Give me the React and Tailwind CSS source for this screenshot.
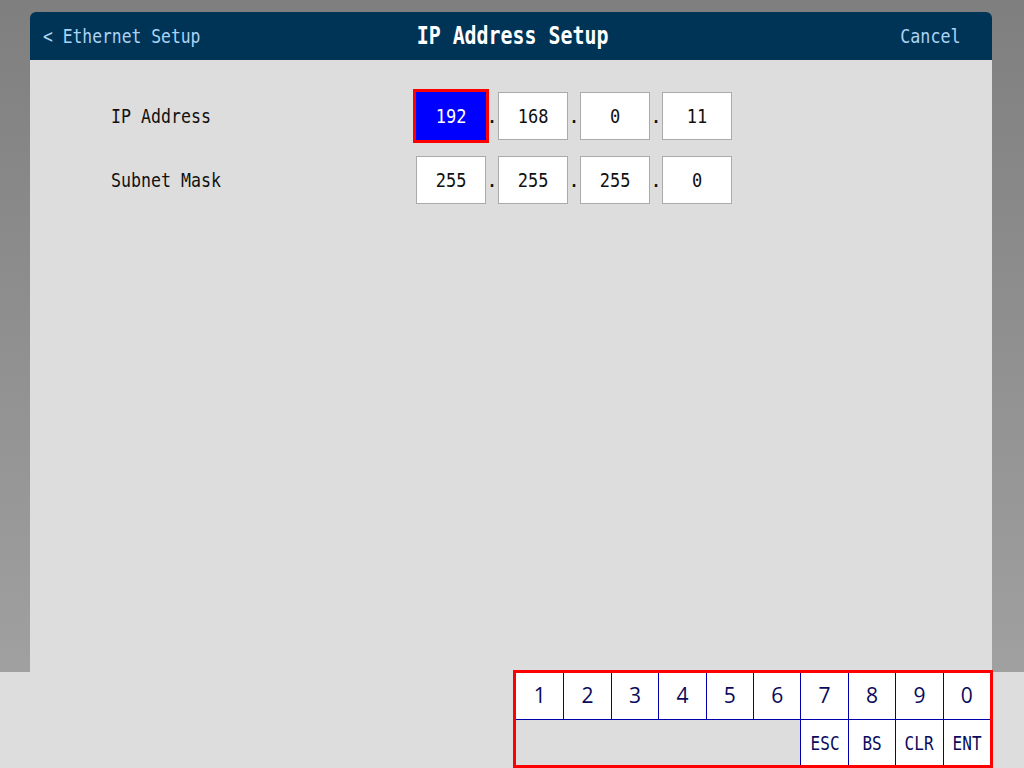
import React from 'react';

const mono = { fontFamily: '"DejaVu Sans Mono", monospace' };

const rows = [
  { label: 'IP Address', values: ['192', '168', '0', '11'], active: 0 },
  { label: 'Subnet Mask', values: ['255', '255', '255', '0'], active: -1 },
];

const digits = ['1', '2', '3', '4', '5', '6', '7', '8', '9', '0'];
const actions = ['ESC', 'BS', 'CLR', 'ENT'];

const Field = ({ value, active }) => (
  <div
    className={
      active
        ? 'w-[70px] h-12 flex items-center justify-center bg-[#0000ff] text-white outline-[3px] outline-solid outline-[#ff0000]'
        : 'w-[70px] h-12 flex items-center justify-center bg-white text-[#111] border border-[#aaaaaa]'
    }
  >
    <span className="inline-block text-[20px] scale-x-[0.85] origin-center" style={mono}>
      {value}
    </span>
  </div>
);

const Keypad = () => (
  <div className="w-[480px] h-[98px] -mt-[2px] border-[3px] border-[#ff0000] grid grid-cols-10 grid-rows-[47px_1fr] bg-[#dddddd]">
    {digits.map((d, i) => (
      <div
        key={d}
        className={
          'bg-white border-b border-[#0000aa] flex items-center justify-center text-[21px] text-[#0a0a5c] ' +
          (i > 0 ? 'border-l' : '')
        }
        style={{ fontFamily: '"Open Sans", sans-serif' }}
      >
        {d}
      </div>
    ))}
    <div className="col-span-6 bg-[#dddddd]" />
    {actions.map((a) => (
      <div key={a} className="bg-white border-l border-[#0000aa] flex items-center justify-center text-[#0a0a5c]">
        <span className="inline-block text-[20px] scale-x-[0.8] origin-center" style={mono}>
          {a}
        </span>
      </div>
    ))}
  </div>
);

const App = () => {
  return (
    <div className="w-[1024px] h-[768px] overflow-hidden flex flex-col bg-linear-to-b from-[#7f7f7f] to-[#a5a5a5]">
      <div className="flex-1 pt-3 pl-[30px] pr-[32px] flex flex-col">
        <div className="h-12 rounded-t-[6px] bg-[#003456] grid grid-cols-[1fr_auto_1fr] items-center px-[13px]">
          <span className="inline-block text-[19px] text-[#acd3f2] scale-x-[0.86] origin-left whitespace-nowrap" style={mono}>
            &lt; Ethernet Setup
          </span>
          <span className="inline-block ml-1 text-[24px] font-bold text-white scale-x-[0.83] origin-center whitespace-nowrap" style={mono}>
            IP Address Setup
          </span>
          <span className="justify-self-end mr-[18px] inline-block text-[19px] text-[#acd3f2] scale-x-[0.88] origin-right" style={mono}>
            Cancel
          </span>
        </div>
        <div className="flex-1 bg-[#dddddd] pt-8 pl-[81px] flex flex-col gap-4">
          {rows.map((row) => (
            <div key={row.label} className="flex items-center">
              <div className="w-[305px] text-[#111]">
                <span className="inline-block text-[20px] scale-x-[0.83] origin-left whitespace-nowrap" style={mono}>
                  {row.label}
                </span>
              </div>
              <div className="flex items-baseline">
                {row.values.map((v, i) => (
                  <React.Fragment key={i}>
                    {i > 0 && (
                      <span className="w-3 text-center text-[20px] text-[#111]" style={mono}>
                        .
                      </span>
                    )}
                    <Field value={v} active={row.active === i} />
                  </React.Fragment>
                ))}
              </div>
            </div>
          ))}
        </div>
      </div>
      <div className="h-24 bg-[#dddddd] flex justify-end pr-[31px]">
        <Keypad />
      </div>
    </div>
  );
};

export default App;
